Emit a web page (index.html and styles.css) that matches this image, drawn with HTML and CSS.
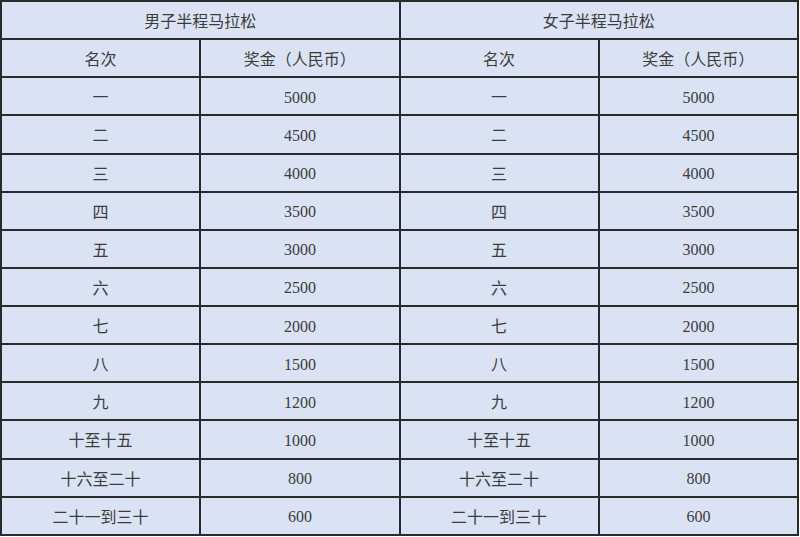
FILE: index.html
```html
<!DOCTYPE html>
<html lang="zh">
<head>
<meta charset="utf-8">
<title>半程马拉松奖金</title>
<link rel="stylesheet" href="styles.css">
</head>
<body>
<table class="prize">
  <colgroup><col class="c"><col class="c"><col class="c"><col class="c"></colgroup>
  <tr class="title"><td colspan="2">男子半程马拉松</td><td colspan="2">女子半程马拉松</td></tr>
  <tr><td>名次</td><td>奖金（人民币）</td><td>名次</td><td>奖金（人民币）</td></tr>
  <tr><td>一</td><td class="n">5000</td><td>一</td><td class="n">5000</td></tr>
  <tr><td>二</td><td class="n">4500</td><td>二</td><td class="n">4500</td></tr>
  <tr><td>三</td><td class="n">4000</td><td>三</td><td class="n">4000</td></tr>
  <tr><td>四</td><td class="n">3500</td><td>四</td><td class="n">3500</td></tr>
  <tr><td>五</td><td class="n">3000</td><td>五</td><td class="n">3000</td></tr>
  <tr><td>六</td><td class="n">2500</td><td>六</td><td class="n">2500</td></tr>
  <tr><td>七</td><td class="n">2000</td><td>七</td><td class="n">2000</td></tr>
  <tr><td>八</td><td class="n">1500</td><td>八</td><td class="n">1500</td></tr>
  <tr><td>九</td><td class="n">1200</td><td>九</td><td class="n">1200</td></tr>
  <tr><td>十至十五</td><td class="n">1000</td><td>十至十五</td><td class="n">1000</td></tr>
  <tr><td>十六至二十</td><td class="n">800</td><td>十六至二十</td><td class="n">800</td></tr>
  <tr><td>二十一到三十</td><td class="n">600</td><td>二十一到三十</td><td class="n">600</td></tr>
</table>
</body>
</html>
```
FILE: styles.css
```css
html, body {
  margin: 0;
  padding: 0;
  background: #ffffff;
}
.prize {
  border-collapse: collapse;
  table-layout: fixed;
  width: 799px;
  background: #dae3f3;
  color: #3c3c3c;
  font-family: "Noto Sans CJK SC", "Noto Sans", sans-serif;
  font-size: 16px;
}
.prize .c {
  width: 25%;
}
.prize td {
  border: 2px solid #2a2a2a;
  height: 36.14px;
  padding: 0;
  text-align: center;
  vertical-align: middle;
  line-height: 20px;
}
.prize td.n {
  font-family: "Liberation Serif", serif;
  font-size: 16px;
  height: 33.14px;
  padding-top: 3px;
}
```
